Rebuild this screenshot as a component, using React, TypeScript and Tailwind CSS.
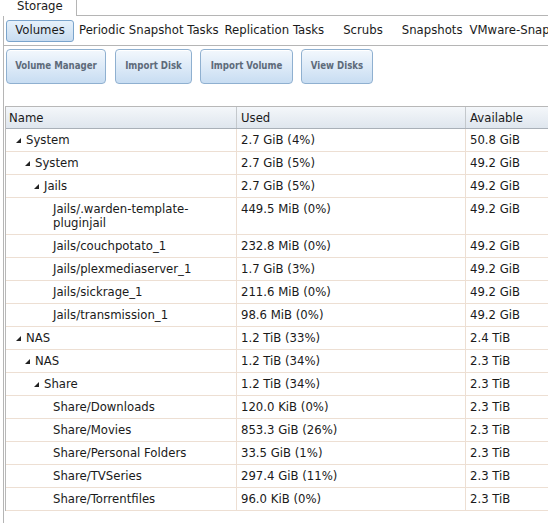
import React from 'react'

type Row = { name: string; used: string; avail: string; level: number; folder?: boolean }

const ROWS: Row[] = [
  { name: 'System', used: '2.7 GiB (4%)', avail: '50.8 GiB', level: 0, folder: true },
  { name: 'System', used: '2.7 GiB (5%)', avail: '49.2 GiB', level: 1, folder: true },
  { name: 'Jails', used: '2.7 GiB (5%)', avail: '49.2 GiB', level: 2, folder: true },
  { name: 'Jails/.warden-template-pluginjail', used: '449.5 MiB (0%)', avail: '49.2 GiB', level: 3 },
  { name: 'Jails/couchpotato_1', used: '232.8 MiB (0%)', avail: '49.2 GiB', level: 3 },
  { name: 'Jails/plexmediaserver_1', used: '1.7 GiB (3%)', avail: '49.2 GiB', level: 3 },
  { name: 'Jails/sickrage_1', used: '211.6 MiB (0%)', avail: '49.2 GiB', level: 3 },
  { name: 'Jails/transmission_1', used: '98.6 MiB (0%)', avail: '49.2 GiB', level: 3 },
  { name: 'NAS', used: '1.2 TiB (33%)', avail: '2.4 TiB', level: 0, folder: true },
  { name: 'NAS', used: '1.2 TiB (34%)', avail: '2.3 TiB', level: 1, folder: true },
  { name: 'Share', used: '1.2 TiB (34%)', avail: '2.3 TiB', level: 2, folder: true },
  { name: 'Share/Downloads', used: '120.0 KiB (0%)', avail: '2.3 TiB', level: 3 },
  { name: 'Share/Movies', used: '853.3 GiB (26%)', avail: '2.3 TiB', level: 3 },
  { name: 'Share/Personal Folders', used: '33.5 GiB (1%)', avail: '2.3 TiB', level: 3 },
  { name: 'Share/TVSeries', used: '297.4 GiB (11%)', avail: '2.3 TiB', level: 3 },
  { name: 'Share/Torrentfiles', used: '96.0 KiB (0%)', avail: '2.3 TiB', level: 3 },
]

const PAD = ['pl-[10px]', 'pl-[19px]', 'pl-[28px]', 'pl-[47px]']

function Expando() {
  return (
    <svg width="5" height="5" viewBox="0 0 5 5" className="shrink-0 mr-[5px] mt-[5px]">
      <polygon points="5,0 5,5 0,5" fill="#222" />
    </svg>
  )
}

function ActionButton({ label, w }: { label: string; w: string }) {
  return (
    <button
      className={`${w} shrink-0 h-[35px] whitespace-nowrap rounded-[4px] border border-[#8fb0d0] bg-gradient-to-b from-[#f3f8fd] to-[#c8ddf2] font-['DejaVu_Sans_Condensed',sans-serif] text-[9.6px] font-bold text-[#5e6b7a] shadow-[inset_0_1px_0_#fff]`}
    >
      {label}
    </button>
  )
}

export default function App() {
  return (
    <div className="w-[548px] h-[523px] bg-white overflow-hidden font-['DejaVu_Sans',sans-serif] text-[11.7px] text-[#1a1a1a]">
      <div className="flex h-[16px]">
        <div className="ml-[5px] w-[72px] border-r border-[#b5b5b5] pl-[12px] leading-[12px]">Storage</div>
        <div className="flex-1 border-b border-[#b5b5b5]" />
      </div>

      <div className="ml-[3px] border-l border-[#b5b5b5] h-[507px]">
        <div className="flex items-center h-[30px] border-b border-[#b5b5b5] whitespace-nowrap overflow-hidden">
          <div className="shrink-0 ml-[2px] w-[68px] h-[22px] rounded-[3px] border border-[#7aa4cc] bg-gradient-to-b from-[#e6f1fb] to-[#c8dcf0] flex items-center justify-center">
            Volumes
          </div>
          <span className="shrink-0 ml-[5px]">Periodic Snapshot Tasks</span>
          <span className="shrink-0 ml-[6px]">Replication Tasks</span>
          <span className="shrink-0 ml-[19px]">Scrubs</span>
          <span className="shrink-0 ml-[19px]">Snapshots</span>
          <span className="shrink-0 ml-[7px]">VMware-Snapshots</span>
        </div>

        <div className="flex pl-[2px] pt-[3px] h-[60px]">
          <ActionButton label="Volume Manager" w="w-[100px]" />
          <div className="w-[9px] shrink-0" />
          <ActionButton label="Import Disk" w="w-[77px]" />
          <div className="w-[8px] shrink-0" />
          <ActionButton label="Import Volume" w="w-[93px]" />
          <div className="w-[8px] shrink-0" />
          <ActionButton label="View Disks" w="w-[72px]" />
        </div>

        <div className="ml-[1px] border-t border-l border-[#b8b8b8]">
          <div className="grid grid-cols-[231px_229px_1fr] h-[22px] border-b border-[#a9b0b8] bg-gradient-to-b from-[#f4f7fa] to-[#dfe6ee] leading-[14px]">
            <div className="pl-[3px] pt-[4px] border-r border-[#c4c8cc]">Name</div>
            <div className="pl-[4px] pt-[4px] border-r border-[#c4c8cc]">Used</div>
            <div className="pl-[4px] pt-[4px]">Available</div>
          </div>
          {ROWS.map((r, i) => (
            <div key={i} className="grid grid-cols-[231px_229px_1fr] border-b border-[#eddfd3] leading-[14px]">
              <div className={`${PAD[r.level]} pr-[20px] pt-[4px] pb-[4px] border-r border-[#eddfd3] flex items-start`}>
                {r.folder && <Expando />}
                <span>{r.name}</span>
              </div>
              <div className="pl-[4px] pt-[4px] pb-[4px] border-r border-[#eddfd3]">{r.used}</div>
              <div className="pl-[4px] pt-[4px] pb-[4px]">{r.avail}</div>
            </div>
          ))}
        </div>
      </div>
    </div>
  )
}
